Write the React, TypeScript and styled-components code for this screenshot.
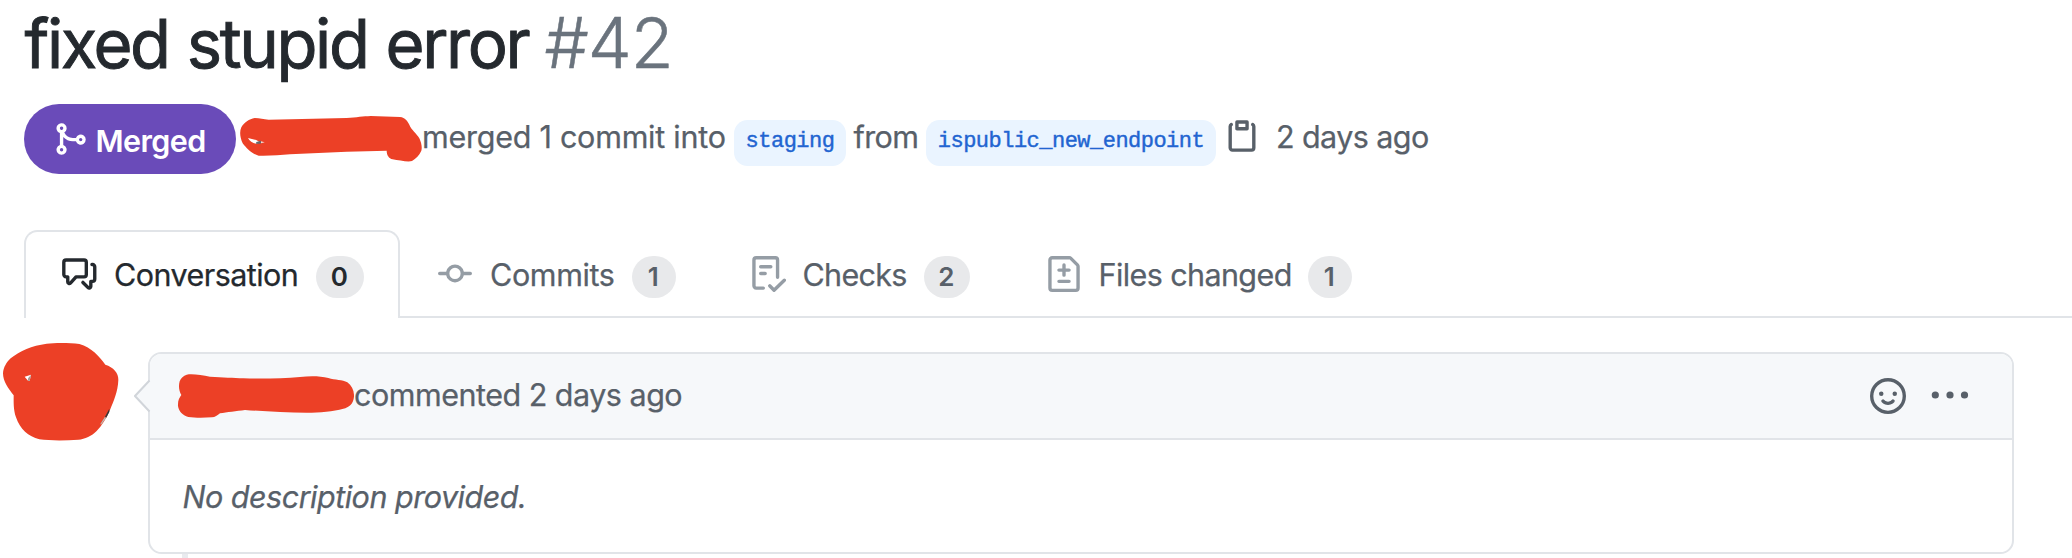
import React from 'react';
import styled, { createGlobalStyle } from 'styled-components';

const Global = createGlobalStyle`
  * { box-sizing: border-box; }
  html, body { margin: 0; background: #fff; overflow: hidden; }
  body { font-family: Inter, "Liberation Sans", sans-serif; color: #24292e; -webkit-text-stroke: 0.25px currentColor; }
  svg { display: block; flex: none; }
`;

const Page = styled.main`
  height: 558px;
  overflow: hidden;
`;

const Title = styled.h1`
  height: 88px;
  margin: 0;
  padding-left: 24.5px;
  font-size: 67px;
  font-weight: 400;
  line-height: 88px;
  letter-spacing: -2.4px;
  word-spacing: 1.6px;
  white-space: pre;
  -webkit-text-stroke: 0.9px currentColor;
`;

const Number = styled.span`
  margin-left: -2px;
  color: #6a737d;
  font-size: 70px;
  font-weight: 300;
  line-height: 1;
  letter-spacing: -1px;
  -webkit-text-stroke: 0.5px currentColor;
`;

const Meta = styled.div`
  display: flex;
  align-items: flex-start;
  height: 70px;
  margin-top: 16px;
  padding-left: 24px;
  color: #586069;
`;

const State = styled.span`
  display: flex;
  align-items: center;
  flex: none;
  width: 212px;
  height: 70px;
  padding-left: 27.5px;
  border-radius: 35px;
  background: #6a4bb9;
  color: #fff;
`;

const StateLabel = styled.span`
  margin-left: 8px;
  padding-top: 4px;
  font-size: 30.5px;
  font-weight: 600;
  line-height: 38px;
  letter-spacing: -0.6px;
  -webkit-text-stroke: 0;
`;

const MetaText = styled.span<{ $width: number; $indent?: number; $track: number }>`
  flex: none;
  width: ${(p) => p.$width}px;
  padding-left: ${(p) => p.$indent ?? 0}px;
  font-size: 30.5px;
  line-height: 66px;
  letter-spacing: ${(p) => p.$track}px;
  white-space: nowrap;
`;

const Branch = styled.code<{ $width: number }>`
  flex: none;
  width: ${(p) => p.$width}px;
  height: 46px;
  margin-top: 16px;
  border-radius: 13.5px;
  background: #eaf4ff;
  color: #2264d1;
  font: 22px/44px "Liberation Mono", monospace;
  letter-spacing: -0.52px;
  text-align: center;
  -webkit-text-stroke: 0.4px currentColor;
`;

const CopyIcon = styled.svg`
  margin: 13.75px 16px 0 8px;
`;

const Tabs = styled.nav`
  display: flex;
  height: 88px;
  margin-top: 56px;
  margin-left: 24px;
  border-bottom: 2px solid #e1e4e8;
`;

const Tab = styled.a<{ $width: number; $active?: boolean }>`
  display: flex;
  align-items: flex-start;
  flex: none;
  width: ${(p) => p.$width}px;
  height: 88px;
  padding: 24px 0 0 35px;
  border: 2px solid ${(p) => (p.$active ? '#e1e4e8' : 'transparent')};
  border-bottom: 0;
  border-radius: 13.5px 13.5px 0 0;
  background: ${(p) => (p.$active ? '#fff' : 'none')};
  color: ${(p) => (p.$active ? '#24292e' : '#586069')};
  > svg { color: ${(p) => (p.$active ? '#24292e' : '#959da5')}; }
`;

const TabLabel = styled.span<{ $width: number; $track: number }>`
  flex: none;
  width: ${(p) => p.$width}px;
  padding-left: 17px;
  font-size: 30.5px;
  line-height: 38px;
  letter-spacing: ${(p) => p.$track}px;
  white-space: nowrap;
`;

const Counter = styled.span<{ $width: number }>`
  flex: none;
  width: ${(p) => p.$width}px;
  height: 42px;
  padding-right: 1.5px;
  border-radius: 21px;
  background: #e8e9eb;
  font-size: 26px;
  font-weight: 600;
  line-height: 42px;
  text-align: center;
  -webkit-text-stroke: 0;
`;

const Timeline = styled.section`
  display: flex;
  align-items: flex-start;
  margin-top: 34px;
`;

const AvatarColumn = styled.div`
  flex: none;
  width: 148px;
  height: 202px;
  > svg { margin-top: -12px; }
`;

const Comment = styled.article`
  position: relative;
  width: 1866px;
  height: 202px;
  border: 2px solid #e1e4e8;
  border-radius: 13.5px;
`;

const Caret = styled.svg`
  position: absolute;
  left: -16px;
  top: 24px;
`;

const CommentHeader = styled.header`
  display: flex;
  align-items: center;
  height: 86px;
  padding-right: 42px;
  border-bottom: 2px solid #e1e4e8;
  border-radius: 11.5px 11.5px 0 0;
  background: #f6f8fa;
  color: #586069;
`;

const CommentMeta = styled.span`
  margin-right: auto;
  padding-bottom: 3px;
  font-size: 30.5px;
  line-height: 38px;
  letter-spacing: -0.5px;
`;

const Kebab = styled.svg`
  margin-left: 24px;
`;

const CommentBody = styled.p`
  margin: 0;
  padding-left: 32.5px;
  color: #586069;
  font-size: 30.5px;
  font-style: italic;
  line-height: 113px;
  letter-spacing: -0.5px;
`;

const Thread = styled.div`
  width: 6px;
  height: 4px;
  margin-left: 182px;
  background: #e9ebef;
`;

const RED = '#ec4026';

function Icon({ d }: { d: string }) {
  return (
    <svg width="36" height="36" viewBox="0 0 16 16" fill="currentColor">
      <path fillRule="evenodd" d={d} />
    </svg>
  );
}

const MERGE =
  'M5 3.254V3.25v.005a.75.75 0 110-.005v.004zm.45 1.9a2.25 2.25 0 10-1.95.218v5.256a2.25 2.25 0 101.5 0V7.123A5.735 5.735 0 009.25 9h1.378a2.251 2.251 0 100-1.5H9.25a4.25 4.25 0 01-3.8-2.346zM12.75 9a.75.75 0 100-1.5.75.75 0 000 1.5zm-8.5 4.5a.75.75 0 100-1.5.75.75 0 000 1.5z';
const PASTE =
  'M5.75 1a.75.75 0 00-.75.75v3c0 .414.336.75.75.75h4.5a.75.75 0 00.75-.75v-3a.75.75 0 00-.75-.75h-4.5zm.75 3V2.5h3V4h-3zm-2.874-.467a.75.75 0 00-.752-1.298A1.75 1.75 0 002 3.75v9.5c0 .966.784 1.75 1.75 1.75h8.5A1.75 1.75 0 0014 13.25v-9.5a1.75 1.75 0 00-.874-1.515.75.75 0 10-.752 1.298.25.25 0 01.126.217v9.5a.25.25 0 01-.25.25h-8.5a.25.25 0 01-.25-.25v-9.5a.25.25 0 01.126-.217z';
const DISCUSSION =
  'M2 2.75a.25.25 0 01.25-.25h8a.25.25 0 01.25.25v5.5a.25.25 0 01-.25.25h-3.5a.75.75 0 00-.53.22L3.75 11.44V9.25a.75.75 0 00-.75-.75h-.75a.25.25 0 01-.25-.25v-5.5zM2.25 1A1.75 1.75 0 00.5 2.75v5.5C.5 9.216 1.284 10 2.25 10v1.543a1.457 1.457 0 002.487 1.03L7.061 10h3.189A1.75 1.75 0 0012 8.25v-5.5A1.75 1.75 0 0010.25 1h-8zM14.25 4.75a.25.25 0 00-.25-.25h-.25a.75.75 0 110-1.5H14c.966 0 1.75.784 1.75 1.75v5.5A1.75 1.75 0 0114 12v1.543a1.457 1.457 0 01-2.487 1.03L9.22 12.28a.75.75 0 111.06-1.06l2.22 2.22v-2.19a.75.75 0 01.75-.75H14a.25.25 0 00.25-.25v-5.5z';
const COMMIT =
  'M10.5 7.75a2.5 2.5 0 11-5 0 2.5 2.5 0 015 0zm1.43.75a4.002 4.002 0 01-7.86 0H1.2a.75.75 0 110-1.5h2.87a4.001 4.001 0 017.86 0h2.87a.75.75 0 110 1.5h-2.87z';
const CHECKLIST =
  'M2.5 1.75a.25.25 0 01.25-.25h8.5a.25.25 0 01.25.25v7.736a.75.75 0 101.5 0V1.75A1.75 1.75 0 0011.25 0h-8.5A1.75 1.75 0 001 1.75v11.5c0 .966.784 1.75 1.75 1.75h3.17a.75.75 0 000-1.5H2.75a.25.25 0 01-.25-.25V1.75zM4.75 4a.75.75 0 000 1.5h4.5a.75.75 0 000-1.5h-4.5zM4 7.75A.75.75 0 014.75 7h2a.75.75 0 010 1.5h-2A.75.75 0 014 7.75zm11.774 3.537a.75.75 0 00-1.048-1.074L10.7 14.145 9.281 12.72a.75.75 0 00-1.062 1.058l1.943 1.95a.75.75 0 001.055.008l4.557-4.45z';
const DIFF =
  'M2.75 1.5a.25.25 0 00-.25.25v12.5c0 .138.112.25.25.25h10.5a.25.25 0 00.25-.25V4.664a.25.25 0 00-.073-.177l-2.914-2.914a.25.25 0 00-.177-.073H2.75zM1 1.75C1 .784 1.784 0 2.75 0h7.586c.464 0 .909.184 1.237.513l2.914 2.914c.329.328.513.773.513 1.237v9.586A1.75 1.75 0 0113.25 16H2.75A1.75 1.75 0 011 14.25V1.75zm7 1.5a.75.75 0 01.75.75v1.5h1.5a.75.75 0 010 1.5h-1.5v1.5a.75.75 0 01-1.5 0V7h-1.5a.75.75 0 010-1.5h1.5V4A.75.75 0 018 3.25zm-3 8a.75.75 0 01.75-.75h4.5a.75.75 0 010 1.5h-4.5a.75.75 0 01-.75-.75z';
const SMILEY =
  'M1.5 8a6.5 6.5 0 1113 0 6.5 6.5 0 01-13 0zM8 0a8 8 0 100 16A8 8 0 008 0zM5 8a1 1 0 100-2 1 1 0 000 2zm7-1a1 1 0 11-2 0 1 1 0 012 0zM5.32 9.636a.75.75 0 011.038.175l.007.009c.103.118.22.222.35.31.264.178.683.37 1.285.37.602 0 1.02-.192 1.285-.371.13-.088.247-.192.35-.31l.007-.008a.75.75 0 111.222.87l-.614-.431c.614.43.614.431.613.431v.001l-.001.002-.002.003-.005.007-.014.019a1.984 1.984 0 01-.184.213c-.16.166-.338.316-.53.445-.63.418-1.37.638-2.127.629-.946 0-1.652-.308-2.126-.63a3.331 3.331 0 01-.715-.657l-.014-.02-.005-.006-.002-.003v-.002h-.001l.613-.432-.614.43a.75.75 0 01.183-1.044h.001z';

export default function App() {
  return (
    <Page>
      <Global />
      <Title>
        fixed stupid error <Number>#42</Number>
      </Title>
      <Meta>
        <State>
          <Icon d={MERGE} />
          <StateLabel>Merged</StateLabel>
        </State>
        <svg width="186" height="70" viewBox="708 42 558 210">
          <path
            fill={RED}
            d="M764 84C780 84 790 88 806 89L1040 84C1070 82 1090 79 1112 78L1200 81C1216 83 1222 93 1228 104C1234 120 1250 130 1258 145C1264 158 1267 172 1264 182C1258 197 1248 205 1236 213C1225 217 1196 211 1178 208C1166 205 1160 195 1160 182L1040 185L870 193C840 195 810 198 776 197C755 192 740 175 728 160C720 143 718 125 724 112C732 97 748 87 764 84Z"
          />
          <path fill="#fff" d="M744 144C752 147 762 148 770 151L780 157L768 161C758 159 748 153 744 144Z" />
          <path fill="#5f6a70" d="M769 156L783 152L782 161L768 161Z" />
          <path fill="#f3d8d2" d="M783 154L794 157L783 160Z" />
        </svg>
        <MetaText $width={312} $track={-0.25}>merged 1 commit into</MetaText>
        <Branch $width={112}>staging</Branch>
        <MetaText $width={80} $indent={7.5} $track={-0.6}>from</MetaText>
        <Branch $width={290}>ispublic_new_endpoint</Branch>
        <CopyIcon width="36" height="36" viewBox="0 0 16 16" fill="currentColor">
          <path fillRule="evenodd" d={PASTE} />
        </CopyIcon>
        <MetaText $width={160} $track={-0.58}>2 days ago</MetaText>
      </Meta>

      <Tabs>
        <Tab $width={376} $active>
          <Icon d={DISCUSSION} />
          <TabLabel $width={219} $track={-0.55}>Conversation</TabLabel>
          <Counter $width={48}>0</Counter>
        </Tab>
        <Tab $width={312.5}>
          <Icon d={COMMIT} />
          <TabLabel $width={159} $track={-0.37}>Commits</TabLabel>
          <Counter $width={44}>1</Counter>
        </Tab>
        <Tab $width={296}>
          <Icon d={CHECKLIST} />
          <TabLabel $width={138.5} $track={-0.7}>Checks</TabLabel>
          <Counter $width={46}>2</Counter>
        </Tab>
        <Tab $width={344}>
          <Icon d={DIFF} />
          <TabLabel $width={226.5} $track={-0.6}>Files changed</TabLabel>
          <Counter $width={44}>1</Counter>
        </Tab>
      </Tabs>

      <Timeline>
        <AvatarColumn>
          <svg width="126" height="110" viewBox="0 30 378 330">
            <path
              fill={RED}
              d="M140 41C165 38 210 38 238 42C275 52 298 80 316 104C340 112 356 128 355 150C354 185 340 215 330 240C320 265 305 287 290 303C275 318 255 328 235 329C195 332 150 332 118 328C85 320 60 297 48 262C40 240 41 215 41 196C25 175 9 155 9 130C10 112 20 96 32 85C60 63 95 47 140 41Z"
            />
            <path fill="#fff" d="M74 140L93 134L89 153L84 152Z" />
            <path fill="#a99b95" d="M84 145L93 135L89 153L84 152Z" />
            <path fill="#30383a" d="M328 236L328 246L318 264L315 260Z" />
            <path fill="#b9bdb9" d="M315 260L318 264L303 284L301 282Z" />
          </svg>
        </AvatarColumn>
        <Comment>
          <CommentHeader>
            <svg width="204" height="84" viewBox="450 72 612 252">
              <path
                fill={RED}
                d="M560 134C580 131 605 136 630 140C670 143 700 143 730 145C790 147 850 145 900 141C930 138 960 138 985 144C1005 150 1028 149 1042 157C1056 167 1063 184 1062 200C1060 222 1047 232 1030 236C1000 244 960 248 920 248C860 248 790 244 735 240C710 243 680 247 660 250C652 257 645 262 636 262C610 264 585 264 565 261C547 255 536 243 534 228C533 212 538 203 544 195C537 183 535 168 539 154C543 144 550 137 560 134Z"
              />
            </svg>
            <CommentMeta>commented 2 days ago</CommentMeta>
            <Icon d={SMILEY} />
            <Kebab width="40" height="10" viewBox="0 0 40 10" fill="currentColor">
              <circle cx="5.3" cy="4" r="3.6" />
              <circle cx="20" cy="4" r="3.6" />
              <circle cx="34.5" cy="4" r="3.6" />
            </Kebab>
          </CommentHeader>
          <CommentBody>No description provided.</CommentBody>
          <Caret width="18" height="36" viewBox="0 0 18 36">
            <path fill="#f6f8fa" d="M17 2L1 18L17 34Z" />
            <path fill="none" stroke="#d1d5da" strokeWidth="2" d="M15.5 2.5L1 18L15.5 33.5" />
          </Caret>
        </Comment>
      </Timeline>
      <Thread />
    </Page>
  );
}
